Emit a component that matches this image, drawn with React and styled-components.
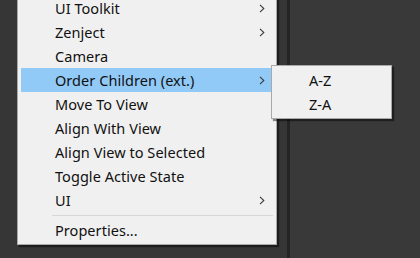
import React from "react";
import styled, { createGlobalStyle } from "styled-components";

const Global = createGlobalStyle`
  html, body {
    margin: 0;
    padding: 0;
    background: #393939;
  }
  body {
    font-family: "Noto Sans", "Segoe UI", "Liberation Sans", sans-serif;
  }
`;

const Desktop = styled.div`
  position: relative;
  width: 420px;
  height: 258px;
  overflow: hidden;
  display: flex;
  background: #393939;
`;

const LeftPanel = styled.div`
  width: 287px;
  background: #363636;
`;

const Divider = styled.div`
  width: 3px;
  background: #242424;
`;

const RightPanel = styled.div`
  flex: 1;
  background: #393939;
`;

const Menu = styled.ul`
  position: absolute;
  left: ${(p) => p.$x}px;
  top: ${(p) => p.$y}px;
  width: ${(p) => p.$w}px;
  margin: 0;
  padding: 2px 3px 2px 3px;
  list-style: none;
  background: #f0f0f0;
  border: 1px solid #a9a9a9;
  box-shadow: 2px 2px 1px rgba(0, 0, 0, 0.45);
  box-sizing: border-box;
`;

const Item = styled.li`
  position: relative;
  height: 24px;
  display: flex;
  align-items: center;
  padding-left: ${(p) => p.$indent}px;
  font-size: 14.5px;
  letter-spacing: 0.05px;
  color: #111;
  background: ${(p) => (p.$active ? "#91c9f7" : "transparent")};
  white-space: nowrap;
`;

const Chevron = styled.svg`
  position: absolute;
  right: 8px;
  top: 8px;
`;

const Separator = styled.li`
  height: 1px;
  margin: 3px 0 2px 31px;
  background: #d7d7d7;
`;

const Arrow = () => (
  <Chevron width="6" height="9" viewBox="0 0 6 9">
    <path d="M1 0.8 L4.8 4.5 L1 8.2" fill="none" stroke="#3c3c3c" strokeWidth="1.1" />
  </Chevron>
);

const mainItems = [
  { label: "UI Toolkit", sub: true },
  { label: "Zenject", sub: true },
  { label: "Camera" },
  { label: "Order Children (ext.)", sub: true, active: true },
  { label: "Move To View" },
  { label: "Align With View" },
  { label: "Align View to Selected" },
  { label: "Toggle Active State" },
  { label: "UI", sub: true },
  { sep: true },
  { label: "Properties..." },
];

export default function App() {
  return (
    <>
      <Global />
      <Desktop>
        <LeftPanel />
        <Divider />
        <RightPanel />

        <Menu $x={17} $y={-7} $w={260}>
          {mainItems.map((it, i) =>
            it.sep ? (
              <Separator key={i} />
            ) : (
              <Item key={i} $indent={34} $active={it.active}>
                {it.label}
                {it.sub && <Arrow />}
              </Item>
            )
          )}
        </Menu>

        <Menu $x={271} $y={65} $w={121}>
          <Item $indent={34}>A-Z</Item>
          <Item $indent={34}>Z-A</Item>
        </Menu>
      </Desktop>
    </>
  );
}
